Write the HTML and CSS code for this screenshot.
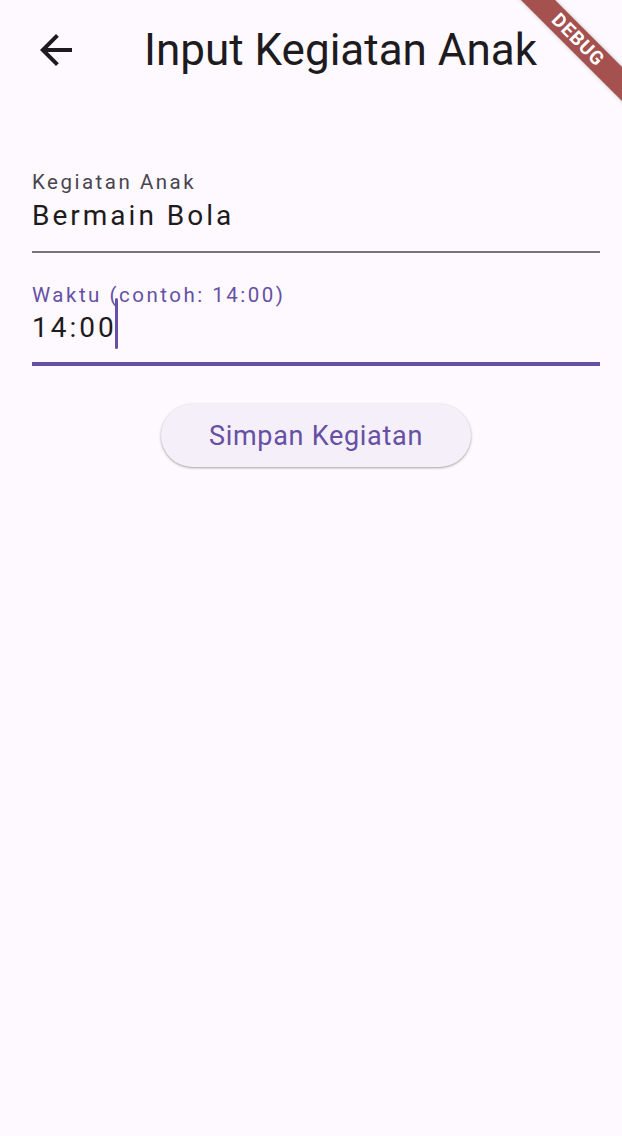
FILE: index.html
```html
<!DOCTYPE html>
<html lang="id">
<head>
<meta charset="utf-8">
<link rel="stylesheet" href="styles.css">
</head>
<body>
<div class="screen">
  <header class="appbar">
    <svg class="back" viewBox="0 0 24 24" width="48" height="48"><path d="M20 11H7.83l5.59-5.59L12 4l-8 8 8 8 1.41-1.41L7.83 13H20v-2z" fill="#1d1b20"/></svg>
    <h1 class="title">Input Kegiatan Anak</h1>
  </header>
  <main class="form">
    <div class="field">
      <div class="label">Kegiatan Anak</div>
      <div class="value">Bermain Bola</div>
    </div>
    <div class="field focused">
      <div class="label">Waktu (contoh: 14:00)</div>
      <div class="value"><span class="text">14:00<span class="caret"></span></span></div>
    </div>
    <div class="actions">
      <button class="btn">Simpan Kegiatan</button>
    </div>
  </main>
  <div class="banner"><div class="ribbon">DEBUG</div></div>
</div>
</body>
</html>
```
FILE: styles.css
```css
html, body {
  margin: 0;
  padding: 0;
  background: #fdf9fe;
}
.screen {
  position: relative;
  width: 622px;
  height: 1136px;
  overflow: hidden;
  font-family: Roboto, "Noto Sans", sans-serif;
  color: #1d1b20;
}
.appbar {
  height: 100px;
  display: flex;
  align-items: center;
  padding-left: 32px;
}
.back {
  display: block;
  flex: none;
}
.title {
  margin: 0 0 0 64px;
  font-weight: 400;
  font-size: 44px;
  line-height: 52px;
  color: #1d1b20;
}
.form {
  padding: 70px 22px 0 32px;
}
.field {
  border-bottom: 2px solid #79747e;
  padding-bottom: 18px;
}
.field .label {
  font-size: 20.5px;
  line-height: 24px;
  letter-spacing: 2.5px;
  color: #49454f;
}
.field .value {
  margin-top: 5px;
  font-size: 28px;
  line-height: 34px;
  letter-spacing: 3px;
  color: #1d1b20;
}
.field.focused {
  margin-top: 30px;
  border-bottom: 4px solid #6750a4;
  padding-bottom: 17px;
}
.field.focused .label {
  color: #6750a4;
}
.field.focused .value {
  margin-top: 4px;
}
.text {
  position: relative;
}
.caret {
  position: absolute;
  left: 100%;
  top: -13px;
  width: 3px;
  height: 51px;
  margin-left: -2px;
  background: #6750a4;
  border-radius: 2px;
}
.actions {
  display: flex;
  justify-content: center;
  padding-top: 38px;
}
.btn {
  width: 310px;
  height: 63px;
  border: none;
  border-radius: 32px;
  background: #f4eff8;
  color: #6750a4;
  font-family: Roboto, "Noto Sans", sans-serif;
  font-size: 27px;
  letter-spacing: 0.7px;
  box-shadow: 0 1px 3px rgba(0,0,0,0.25), 0 1px 2px rgba(0,0,0,0.12);
  padding: 0;
}
.banner {
  position: absolute;
  top: 0;
  right: 0;
  width: 122px;
  height: 122px;
  overflow: hidden;
}
.ribbon {
  position: absolute;
  left: -22px;
  top: 28px;
  width: 200px;
  height: 24px;
  line-height: 24px;
  transform: rotate(45deg);
  background: #a4514f;
  color: #fff;
  font-weight: 700;
  font-size: 19px;
  letter-spacing: 1px;
  text-align: center;
  box-shadow: 0 0 4px rgba(0,0,0,0.25);
}
```
